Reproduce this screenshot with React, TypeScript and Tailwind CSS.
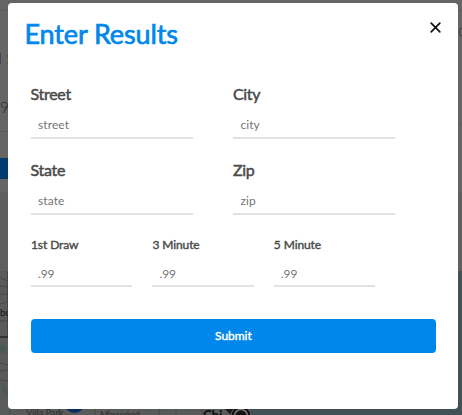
type FieldProps = { label: string; placeholder: string; small?: boolean };

function Field({ label, placeholder, small }: FieldProps) {
  return (
    <label className={small ? 'block w-1/4' : 'block w-2/5'}>
      <span
        className={
          small
            ? 'block h-[22px] text-[12px] leading-[22px] tracking-[-0.1px] text-[#4a4a4a] [-webkit-text-stroke:0.4px_#4a4a4a]'
            : '-ml-[0.5px] -mt-px block h-[25px] text-[16px] leading-[24px] tracking-[-0.3px] text-[#4a4a4a] [-webkit-text-stroke:0.5px_#4a4a4a]'
        }
      >
        {label}
      </span>
      <input
        placeholder={placeholder}
        className={
          (small ? 'h-[31px] pt-[5px] tracking-[-0.1px]' : 'h-[32px] pt-[5px] tracking-[0.1px]') +
          ' block w-full border-b-2 border-[#e2e2e2] bg-white pl-[7px] text-[12px] outline-none placeholder:text-[#757575]'
        }
      />
    </label>
  );
}

function Backdrop() {
  return (
    <svg className="absolute inset-0" width="462" height="415" viewBox="0 0 462 415" fontFamily="Lato, sans-serif">
      <rect width="462" height="415" fill="#666564" />
      <rect y="192" width="462" height="223" fill="#605f5e" />
      <path d="M0 10.5H462M0 131.5H8M458 123.5H462" stroke="#5d5c5b" />
      <rect y="158" width="8" height="21" fill="#003c6d" />
      <rect y="271" width="250" height="144" fill="#585b5a" />
      <rect x="250" y="271" width="212" height="144" fill="#425157" />
      <path d="M0 278L8 281M0 286L8 287M0 294H8M0 304L8 302M0 321H8M0 363L8 365M0 371L8 370M0 380L8 381M7.5 271V337" stroke="#454746" fill="none" />
      <path d="M0 337H8" stroke="#303332" strokeWidth="2" />
      <path d="M0 345H6V353H0ZM2 384L7 390V397L3 393Z" fill="#4b5a50" />
      <path d="M10 408V415M59 408V415M95 408V415M109 408V415M128 408V415M159 408V415M176 408V415M202 408V415" stroke="#484a49" />
      <text x="-7" y="64" fontSize="16" fontWeight="300" fill="#292929">d S</text>
      <text x="0" y="113" fontSize="15.5" fontWeight="300" fill="#292929">9</text>
      <text x="458.5" y="36" fontSize="12" fontWeight="300" fill="#292929">0</text>
      <text x="0" y="316" fontSize="10" fill="#171717">bu</text>
      <text x="26" y="416" fontSize="9.5" letterSpacing="-0.15" fill="#303030">Villa Park</text>
      <text x="100" y="418" fontSize="9.5" letterSpacing="-0.3" fill="#303030">Maywood</text>
      <circle cx="74.5" cy="403" r="10" fill="#082d62" />
      <text x="203" y="420" fontSize="13" fontWeight="900" fill="#101010">Chi</text>
      <path d="M224 408H238L231 415Z" fill="#191b1b" />
      <circle cx="241" cy="416" r="10" fill="#111" stroke="#626564" />
      <circle cx="241" cy="416" r="6.5" fill="none" stroke="#777" strokeWidth="1.5" />
    </svg>
  );
}

export default function App() {
  return (
    <div className="relative h-[415px] w-[462px] overflow-hidden font-['Lato',sans-serif]">
      <Backdrop />
      <section className="relative mt-[3px] ml-[8px] h-[405.5px] w-[450px] rounded-[4px] bg-white">
        <header className="flex h-[79px] items-start justify-between pt-[13px] pr-[17px] pl-[16.5px]">
          <h1 className="text-[27px] leading-[36px] tracking-[-0.12px] text-[#0087eb] [-webkit-text-stroke:0.7px_#0087eb]">
            Enter Results
          </h1>
          <button aria-label="Close" className="mt-[6px]">
            <svg width="11" height="11" viewBox="0 0 11 11" stroke="#111" strokeWidth="1.7" strokeLinecap="round">
              <path d="M1.2 1.2L9.8 9.8M9.8 1.2L1.2 9.8" />
            </svg>
          </button>
        </header>
        <form className="w-[427.8px] pl-[23px]" onSubmit={(e) => e.preventDefault()}>
          <div className="flex gap-x-[10%] pt-[1px]">
            <Field label="Street" placeholder="street" />
            <Field label="City" placeholder="city" />
          </div>
          <div className="mt-[20px] flex gap-x-[10%]">
            <Field label="State" placeholder="state" />
            <Field label="Zip" placeholder="zip" />
          </div>
          <div className="mt-[19px] flex gap-x-[5%]">
            <Field small label="1st Draw" placeholder=".99" />
            <Field small label="3 Minute" placeholder=".99" />
            <Field small label="5 Minute" placeholder=".99" />
          </div>
          <button className="mt-[31.5px] block h-[34px] w-full rounded-[4px] bg-[#0087eb] text-[12px] tracking-[-0.05px] text-white [-webkit-text-stroke:0.4px_#fff]">
            Submit
          </button>
        </form>
      </section>
    </div>
  );
}
